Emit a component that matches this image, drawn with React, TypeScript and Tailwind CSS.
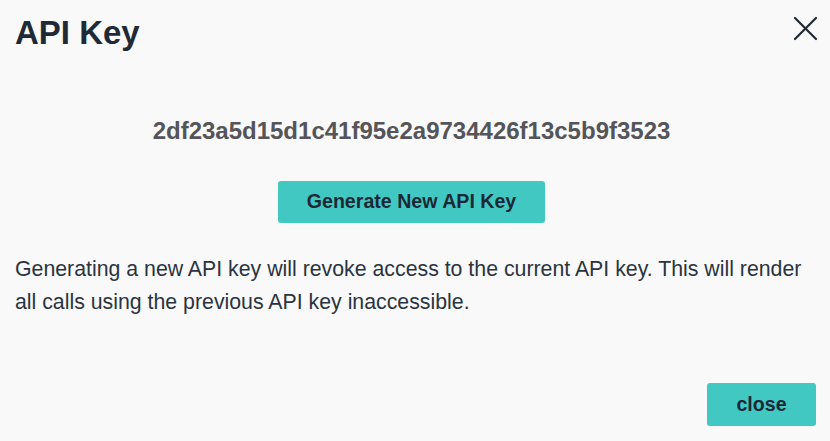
import React from 'react';

const KEY = '2df23a5d15d1c41f95e2a9734426f13c5b9f3523';

const CloseIcon: React.FC = () => (
  <svg width="25" height="25" viewBox="0 0 25 25" fill="none" stroke="#1f2a36" strokeWidth="2.2" strokeLinecap="round">
    <line x1="2" y1="2" x2="23" y2="23" />
    <line x1="23" y1="2" x2="2" y2="23" />
  </svg>
);

const App: React.FC = () => {
  return (
    <div className="w-[830px] h-[441px] bg-[#f9f9f9] flex flex-col font-['Liberation_Sans',Arial,sans-serif]">
      {/* Header */}
      <div className="flex items-start justify-between pl-[15px] pr-[12px] pt-[13px]">
        <h1 className="text-[33px] leading-[39px] font-bold text-[#1f2a36]">API Key</h1>
        <button className="mt-[3px]" aria-label="close">
          <CloseIcon />
        </button>
      </div>

      {/* Body */}
      <div className="flex flex-col pl-[15px] pr-[22px] pt-[65px]">
        <div className="text-center text-[24px] leading-[28px] font-bold text-[#555559]">{KEY}</div>
        <div className="flex justify-center mt-[36px]">
          <button className="w-[267px] h-[42px] rounded-[3px] bg-[#42c8c2] text-[19.6px] font-bold text-[#1c2836]">
            Generate New API Key
          </button>
        </div>
        <p className="mt-[30px] text-[21.3px] leading-[33px] text-[#2a3440]">
          Generating a new API key will revoke access to the current API key. This will render all calls
          using the previous API key inaccessible.
        </p>
      </div>

      {/* Footer */}
      <div className="mt-auto flex justify-end pr-[14px] pb-[15px]">
        <button className="w-[109px] h-[43px] rounded-[3px] bg-[#42c8c2] text-[19.6px] font-bold text-[#1c2836]">
          close
        </button>
      </div>
    </div>
  );
};

export default App;
